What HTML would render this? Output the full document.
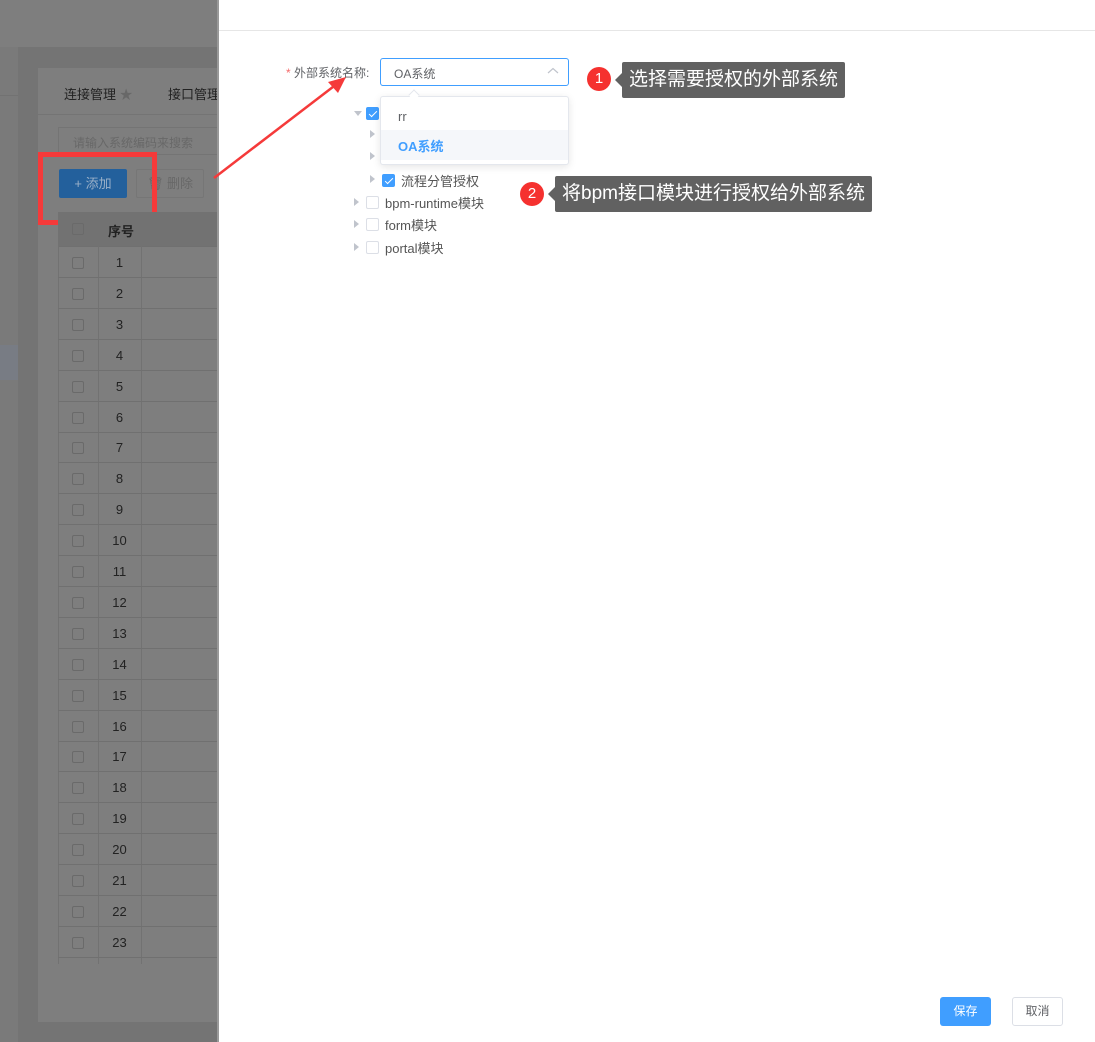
<!DOCTYPE html>
<html><head><meta charset="utf-8"><style>
*{margin:0;padding:0;box-sizing:border-box}
body{width:1095px;height:1042px;position:relative;overflow:hidden;font-family:"Liberation Sans","Noto Sans CJK SC",sans-serif;background:#747474}
.a{position:absolute}
.cb{position:absolute;width:12px;height:12px;border:1px solid #6a6a6a;border-radius:2px}
.row{position:absolute;left:58px;width:160px;height:31px;border-bottom:1px solid #707070;font-size:13px;color:#222}
.row span{position:absolute;left:40px;width:43px;text-align:center;top:8px}
.tc{position:absolute;width:13px;height:13px;border:1px solid #dcdfe6;border-radius:2px;background:#fff}
.tc.on{background:#409eff;border-color:#409eff}
.tc.on::after{content:"";position:absolute;left:3.5px;top:1px;width:3px;height:7px;border:solid #fff;border-width:0 1.5px 1.5px 0;transform:rotate(45deg)}
.tri{position:absolute;width:0;height:0;border-top:4px solid transparent;border-bottom:4px solid transparent;border-left:5px solid #c0c4cc}
.tl{position:absolute;font-size:13px;color:#555}
.tip{position:absolute;background:#616161;color:#fff;font-size:19px;height:36px;line-height:36px;padding:0 7px;border-radius:2px}
.tip::before{content:"";position:absolute;left:-7px;top:11px;border-top:7px solid transparent;border-bottom:7px solid transparent;border-right:7px solid #616161}
.num{position:absolute;width:24px;height:24px;border-radius:50%;background:#f5312f;color:#fff;font-size:15px;text-align:center;line-height:24px}
</style></head><body>
<div class="a" style="left:0;top:0;width:218px;height:47px;background:#7e7e7e"></div>
<div class="a" style="left:0;top:47px;width:18px;height:995px;background:#7a7a7a"></div>
<div class="a" style="left:0;top:95px;width:18px;height:1px;background:#727272"></div>
<div class="a" style="left:0;top:345px;width:18px;height:35px;background:#787c84"></div>
<div class="a" style="left:38px;top:68px;width:180px;height:954px;background:#7e7e7e"></div>
<div class="a" style="left:38px;top:114px;width:180px;height:1px;background:#747474"></div>
<div class="a" style="left:64px;top:84px;font-size:13px;color:#222">连接管理 <span style="color:#686868">★</span></div>
<div class="a" style="left:168px;top:84px;font-size:13px;color:#222">接口管理</div>
<div class="a" style="left:58px;top:127px;width:160px;height:28px;border:1px solid #747474;font-size:12px;color:#686868;padding:6px 14px">请输入系统编码来搜索</div>
<div class="a" style="left:59px;top:169px;width:68px;height:29px;background:#23609c;border-radius:2px;color:#9ab0c8;font-size:13px;line-height:29px;text-align:center">+ 添加</div>
<div class="a" style="left:136px;top:169px;width:68px;height:29px;border:1px solid #767676;border-radius:2px;color:#686868;font-size:13px;line-height:27px;text-align:center">🗑 删除</div>
<div class="a" style="left:38px;top:152px;width:119px;height:73px;border:5px solid #f53a3a"></div>
<div class="a" style="left:58px;top:212px;width:160px;height:35px;background:#727272;border-bottom:1px solid #707070"></div>
<div class="cb" style="left:72px;top:223px"></div>
<div class="a" style="left:108px;top:221px;font-size:13px;font-weight:bold;color:#222">序号</div>
<div class="a" style="left:98px;top:212px;width:1px;height:752px;background:#727272"></div>
<div class="a" style="left:141px;top:212px;width:1px;height:752px;background:#727272"></div>
<div class="a" style="left:58px;top:212px;width:1px;height:752px;background:#727272"></div>
<div id="rows"></div>
<script>
var h='';for(var i=1;i<=23;i++){var t=247+(i-1)*30.9;h+='<div class="row" style="top:'+t+'px"><div class="cb" style="left:14px;top:10px"></div><span>'+i+'</span></div>';}
document.getElementById('rows').innerHTML=h;
</script>
<div class="a" style="left:217px;top:0;width:2px;height:1042px;background:#999"></div>
<div class="a" style="left:219px;top:0;width:876px;height:1042px;background:#fff"></div>
<div class="a" style="left:219px;top:30px;width:876px;height:1px;background:#e6e6e6"></div>
<div class="a" style="left:286px;top:64px;font-size:12px;color:#606266"><span style="color:#f56c6c">*</span> 外部系统名称:</div>
<div class="a" style="left:380px;top:58px;width:189px;height:28px;border:1px solid #409eff;border-radius:3px;font-size:12px;color:#606266;padding:6px 13px">OA系统</div>
<svg class="a" style="left:547px;top:67px" width="12" height="8"><path d="M1 6 L6 1.5 L11 6" stroke="#c0c4cc" fill="none" stroke-width="1.2"/></svg>
<div class="tri" style="left:354px;top:111px;border:4px solid transparent;border-top:5px solid #c0c4cc;border-bottom:0"></div>
<div class="tc on" style="left:366px;top:107px"></div>
<div class="tri" style="left:370px;top:130px"></div>
<div class="tri" style="left:370px;top:152px"></div>
<div class="tri" style="left:370px;top:175px"></div>
<div class="tc on" style="left:382px;top:174px"></div>
<div class="tl" style="left:401px;top:171px">流程分管授权</div>
<div class="tri" style="left:354px;top:198px"></div><div class="tc" style="left:366px;top:196px"></div><div class="tl" style="left:385px;top:193px">bpm-runtime模块</div>
<div class="tri" style="left:354px;top:220px"></div><div class="tc" style="left:366px;top:218px"></div><div class="tl" style="left:385px;top:215px">form模块</div>
<div class="tri" style="left:354px;top:243px"></div><div class="tc" style="left:366px;top:241px"></div><div class="tl" style="left:385px;top:238px">portal模块</div>
<div class="a" style="left:380px;top:96px;width:189px;height:69px;background:#fff;border:1px solid #e4e7ed;border-radius:3px;box-shadow:0 2px 8px rgba(0,0,0,.1)">
<div style="height:33px;padding:12px 17px 0;font-size:13px;color:#606266">rr</div>
<div style="height:30px;background:#f5f7fa;padding:6px 17px;font-size:13px;color:#409eff;font-weight:bold">OA系统</div></div>
<div class="a" style="left:410px;top:91px;width:8px;height:8px;background:#fff;border-left:1px solid #e4e7ed;border-top:1px solid #e4e7ed;transform:rotate(45deg)"></div>
<svg class="a" style="left:210px;top:72px" width="140" height="110"><path d="M4 106 L132 8" stroke="#f53a3a" stroke-width="2.5"/><path d="M136 5 L118 10 L128 21 Z" fill="#f53a3a"/></svg>
<div class="num" style="left:587px;top:67px">1</div>
<div class="tip" style="left:622px;top:62px">选择需要授权的外部系统</div>
<div class="num" style="left:520px;top:182px">2</div>
<div class="tip" style="left:555px;top:176px">将bpm接口模块进行授权给外部系统</div>
<div class="a" style="left:940px;top:997px;width:51px;height:29px;background:#409eff;border-radius:3px;color:#fff;font-size:12px;text-align:center;line-height:29px">保存</div>
<div class="a" style="left:1012px;top:997px;width:51px;height:29px;border:1px solid #dcdfe6;border-radius:3px;color:#606266;font-size:12px;text-align:center;line-height:27px">取消</div>
</body></html>
